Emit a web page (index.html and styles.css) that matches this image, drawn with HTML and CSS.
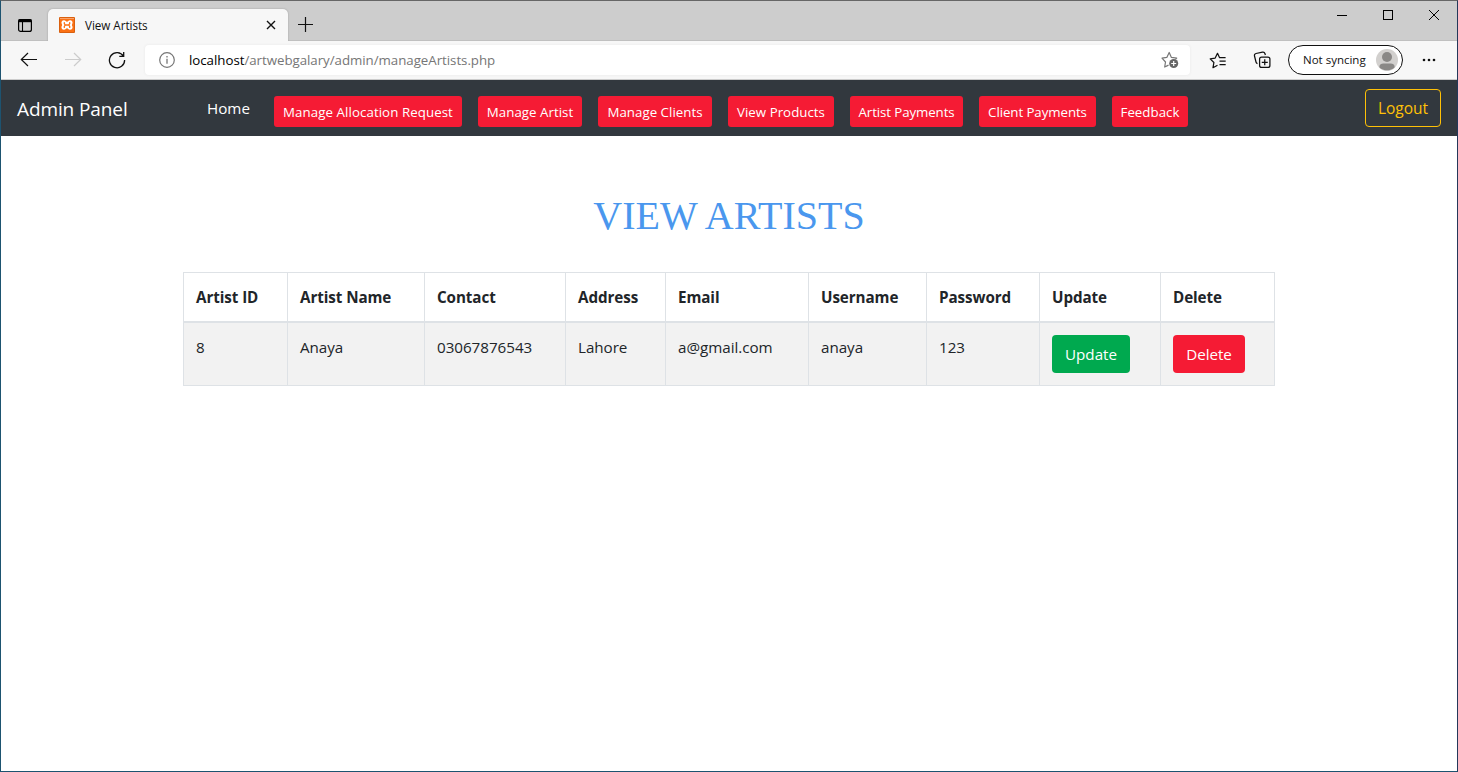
FILE: index.html
```html
<!DOCTYPE html>
<html lang="en">
<head>
<meta charset="utf-8">
<title>View Artists</title>
<link rel="stylesheet" href="styles.css">
</head>
<body>
<div class="window">
  <header class="tabstrip">
    <svg class="tab-actions" width="16" height="16" viewBox="0 0 16 16" fill="none" stroke="#000"><rect x="1.600" y="2.600" width="12.800" height="11.800" rx="2" stroke-width="1.200"/><path d="M1.500 3.700h13" stroke-width="3"/><path d="M5.500 4v10.500" stroke-width="1.100"/></svg>
    <div class="tab">
      <svg width="16" height="16" viewBox="0 0 16 16"><rect width="16" height="16" rx="1" fill="#d9600f"/><rect x="1" y="1" width="14" height="14" fill="#fb7114"/><path d="M1 1.500h14" stroke="#f9a36c"/><path d="M5 3.200c1.700 0 1.900 1.600 3 1.600s1.300-1.600 3-1.600a2.600 2.600 0 0 1 2.100 4.100q-.5.700 0 1.400A2.600 2.600 0 0 1 11 12.800c-1.700 0-1.900-1.600-3-1.600s-1.300 1.600-3 1.600a2.600 2.600 0 0 1-2.100-4.100q.5-.700 0-1.400A2.600 2.600 0 0 1 5 3.200z" fill="#fff"/><path d="M5.300 5.600v1l1 1.400-1 1.400v1M10.700 5.600v1l-1 1.400 1 1.400v1M6.300 8h3.400" fill="none" stroke="#fb7114" stroke-width="1.300" stroke-linecap="round"/></svg>
      <span class="tab-title">View Artists</span>
      <svg class="tab-close" width="10" height="10" viewBox="0 0 10 10" stroke="#111" stroke-width="1.4"><path d="M1 1l8 8M9 1L1 9"/></svg>
    </div>
    <svg class="new-tab" width="15" height="15" viewBox="0 0 15 15" stroke="#111" stroke-width="1.2"><path d="M7.500 0v15M0 7.500h15"/></svg>
    <div class="controls">
      <svg width="12" height="12" viewBox="0 0 12 12" stroke="#000"><path d="M1 6.500h10"/></svg>
      <svg width="12" height="12" viewBox="0 0 12 12" stroke="#000" fill="none"><rect x="1.500" y="1.500" width="9" height="9"/></svg>
      <svg width="12" height="12" viewBox="0 0 12 12" stroke="#000"><path d="M1 1l10 10M11 1L1 11"/></svg>
    </div>
  </header>

  <div class="toolbar">
    <svg class="back" width="18" height="16" viewBox="0 0 18 16" fill="none" stroke="#111" stroke-width="1.200"><path d="M8 1L1.300 7.500 8 14M1.300 7.500H17"/></svg>
    <svg class="forward" width="18" height="16" viewBox="0 0 18 16" fill="none" stroke="#ccc" stroke-width="1.200"><path d="M10 1l6.700 6.500L10 14M16.700 7.500H1"/></svg>
    <svg class="reload" width="18" height="18" viewBox="0 0 18 18" fill="none" stroke="#111" stroke-width="1.300"><path d="M15.500 5.300A7.600 7.600 0 1 0 16.600 9M11.300 5.300h4.400V1"/></svg>
    <div class="address">
      <svg width="16" height="16" viewBox="0 0 16 16" fill="none" stroke="#767676"><circle cx="8" cy="8" r="7.300" stroke-width="1.200"/><path d="M8 6.800v5M8 4v1.500" stroke-width="1.300"/></svg>
      <span class="url"><span class="host">localhost</span>/artwebgalary/admin/manageArtists.php</span>
      <svg class="fav-add" width="18" height="18" viewBox="0 0 18 18" fill="none" stroke="#777" stroke-width="1.200"><path d="M7.500 14.100L3.700 16l.8-5L1 7.200l4.800-.8L8.200 1.500l2.200 4.900 5.300.8-1.200 1.200" stroke-linejoin="round"/><circle cx="12.700" cy="12.500" r="4.500" fill="#666" stroke="none"/><path d="M12.700 10v5M10.200 12.500h5" stroke="#fff"/></svg>
    </div>
    <svg class="favorites" width="18" height="17" viewBox="0 0 18 17" fill="none" stroke="#111" stroke-width="1.250"><path d="M8.500 13.300L4 15.700l.9-5.200L1.200 6.900l5-.8L8.500 1.300l2.100 4.400h6M10.500 9h6.200M10.500 12.500h6.200" stroke-linejoin="round"/></svg>
    <svg class="collections" width="18" height="18" viewBox="0 0 18 18" fill="none" stroke="#111" stroke-width="1.250"><rect x="6.600" y="6.100" width="10.300" height="10.300" rx="2"/><path d="M11.750 8.300v6M8.750 11.300h6M4.500 12.600A2.200 2.200 0 0 1 3 11L1.500 5a2 2 0 0 1 1.500-2.500l6.500-1.300A2.200 2.200 0 0 1 12 2.700l.4 1.300"/></svg>
    <div class="profile">
      <span>Not syncing</span>
      <svg width="22" height="22" viewBox="0 0 22 22"><circle cx="11" cy="11" r="11" fill="#d2d0ce"/><circle cx="11" cy="8" r="5" fill="#8a8886"/><path d="M3.300 18.200c0-2.600 2-3.700 4-3.700h7.400c2 0 4 1.100 4 3.700A11 11 0 0 1 3.300 18.200z" fill="#8a8886"/></svg>
    </div>
    <svg class="more" width="14" height="4" viewBox="0 0 14 4" fill="#111"><circle cx="2" cy="2" r="1.300"/><circle cx="7" cy="2" r="1.300"/><circle cx="12" cy="2" r="1.300"/></svg>
  </div>

  <nav class="navbar">
    <a class="brand">Admin Panel</a>
    <a class="home">Home</a>
    <div class="links">
      <a class="btn-sm w-alloc">Manage Allocation Request</a>
      <a class="btn-sm w-artist">Manage Artist</a>
      <a class="btn-sm w-clients">Manage Clients</a>
      <a class="btn-sm w-products">View Products</a>
      <a class="btn-sm w-apay">Artist Payments</a>
      <a class="btn-sm w-cpay">Client Payments</a>
      <a class="btn-sm w-feedback">Feedback</a>
    </div>
    <a class="logout">Logout</a>
  </nav>

  <main>
    <h1>VIEW ARTISTS</h1>
    <table>
      <colgroup><col class="c1"><col class="c2"><col class="c3"><col class="c4"><col class="c5"><col class="c6"><col class="c7"><col class="c8"><col class="c9"></colgroup>
      <thead><tr><th>Artist ID</th><th>Artist Name</th><th>Contact</th><th>Address</th><th>Email</th><th>Username</th><th>Password</th><th>Update</th><th>Delete</th></tr></thead>
      <tbody><tr><td>8</td><td>Anaya</td><td>03067876543</td><td>Lahore</td><td>a@gmail.com</td><td>anaya</td><td>123</td><td><a class="btn update">Update</a></td><td><a class="btn delete">Delete</a></td></tr></tbody>
    </table>
  </main>
</div>
</body>
</html>
```
FILE: styles.css
```css
* { box-sizing: border-box; }
body { margin: 0; background: #fff; font-family: "Open Sans", "Noto Sans", sans-serif; font-size: 15.2px; line-height: 24px; color: #212529; }
svg { display: block; flex: none; }
.window { width: 1458px; height: 772px; overflow: hidden; border: 1px solid #1d5370; border-top-color: #666; border-right-color: #24385a; }
.tabstrip { display: flex; height: 40px; background: #cdcdcd; border-bottom: 1px solid #c0c0c0; }
.tab-actions { margin: 16px 0 0 16px; }
.tab { display: flex; align-items: center; width: 240px; height: 32px; margin: 8px 0 0 15px; padding: 0 12px 0 11px; background: #f7f7f7; border-radius: 5px 5px 0 0; box-shadow: 0 0 2px #999; clip-path: inset(-3px -3px 0 -3px); }
.tab-title { margin-left: 10px; font-size: 11.7px; letter-spacing: -.05px; color: #111; }
.tab-close { margin-left: auto; }
.new-tab { margin: 16px 0 0 10px; }
.controls { display: flex; gap: 34px; margin: 8px 17px 0 auto; }
.toolbar { display: flex; align-items: center; height: 39px; background: #f7f7f7; border-bottom: 1px solid #ccc; }
.back { margin-left: 19px; }
.forward { margin-left: 26px; }
.reload { margin-left: 26px; }
.address { display: flex; align-items: center; width: 1045px; height: 30px; margin-left: 19px; padding: 0 11px 0 14px; background: #fff; border-radius: 4px; box-shadow: 0 0 3px #e8e8e8; }
.url { margin-left: 14px; font-size: 13.3px; letter-spacing: -.035px; color: #767676; white-space: nowrap; }
.host { color: #000; }
.fav-add { margin-left: auto; }
.favorites { margin-left: 19px; }
.collections { margin-left: 26px; }
.profile { display: flex; align-items: center; justify-content: space-between; width: 115px; height: 30px; margin-left: 17px; padding: 0 4px 0 14px; border: 1px solid #111; border-radius: 15px; background: #fff; font-size: 11.5px; color: #111; white-space: nowrap; }
.more { margin-left: 19px; }
.navbar { display: flex; height: 56px; padding: 0 16px; background: #32383e; color: #fff; white-space: nowrap; }
.brand { width: 190px; padding-top: 13px; font-size: 19px; letter-spacing: -.1px; line-height: 32px; }
.home { width: 67px; padding-top: 16px; }
.links { display: flex; gap: 16px; padding-top: 16px; }
.btn-sm { height: 31px; border-radius: 3px; background: #f51b34; font-size: 13.3px; letter-spacing: .02px; line-height: 32px; text-align: center; }
.w-alloc { width: 188px; letter-spacing: .07px; }
.w-artist { width: 104px; }
.w-clients { width: 114px; }
.w-products { width: 106px; }
.w-apay { width: 113px; letter-spacing: -.1px; }
.w-cpay { width: 117px; letter-spacing: -.08px; }
.w-feedback { width: 76px; }
.logout { width: 76px; height: 38px; margin: 9px 0 0 auto; border: 1px solid #ffc107; border-radius: 4px; color: #ffc107; font-size: 15.5px; line-height: 37px; text-align: center; }
main { padding: 56px 182px 0; }
h1 { margin: 0 0 32px; font: 400 40px/48px "Liberation Serif", serif; color: #4a97ee; text-align: center; }
table { width: 1091px; table-layout: fixed; border-collapse: collapse; }
th, td { padding: 12px; border: 1px solid #dee2e6; text-align: left; vertical-align: top; white-space: nowrap; }
th { border-bottom-width: 2px; font-weight: 700; letter-spacing: -.08px; }
td { background: #f2f2f2; letter-spacing: -.03px; }
.btn { display: block; height: 38px; border-radius: 4px; color: #fff; line-height: 38px; text-align: center; }
.update { width: 78px; background: #00a94f; }
.delete { width: 72px; background: #f51b34; }
.c1 { width: 104px; }
.c2 { width: 137px; }
.c3 { width: 141px; }
.c4 { width: 100px; }
.c5 { width: 143px; }
.c6 { width: 118px; }
.c7 { width: 113px; }
.c8 { width: 121px; }
.c9 { width: 114px; }
```
